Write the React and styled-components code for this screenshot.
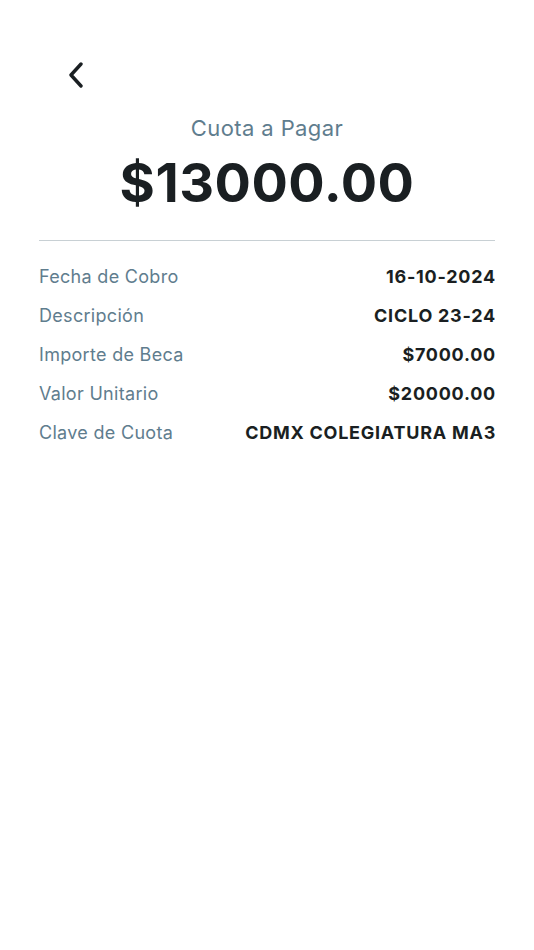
import React from "react";
import styled, { createGlobalStyle } from "styled-components";

const GlobalStyle = createGlobalStyle`
  body {
    margin: 0;
    background: #ffffff;
    font-family: Inter, "Noto Sans", sans-serif;
  }
`;

const Screen = styled.div`
  width: 534px;
  min-height: 950px;
  background: #fff;
  padding: 58px 39px 0;
  box-sizing: border-box;
`;

const BackButton = styled.button`
  display: flex;
  align-items: center;
  justify-content: center;
  width: 34px;
  height: 34px;
  margin-left: 20px;
  padding: 0;
  border: none;
  background: none;
  cursor: pointer;
  color: #1a1f22;
`;

const Header = styled.div`
  display: flex;
  flex-direction: column;
  align-items: center;
  margin-top: 22px;
`;

const Title = styled.div`
  font-size: 22px;
  color: #5f7d8e;
  letter-spacing: 0.4px;
  line-height: 28px;
`;

const Amount = styled.div`
  font-size: 54px;
  font-weight: 700;
  color: #1a1f22;
  line-height: 68px;
  margin-top: 7px;
  letter-spacing: 0.5px;
`;

const Divider = styled.hr`
  border: none;
  height: 1px;
  background: #c8d0d4;
  margin: 23px 0 16px;
`;

const Rows = styled.div`
  display: flex;
  flex-direction: column;
`;

const Row = styled.div`
  display: flex;
  justify-content: space-between;
  align-items: center;
  height: 39px;
`;

const Label = styled.span`
  font-size: 18px;
  color: #5f7d8e;
  letter-spacing: 0.3px;
`;

const Value = styled.span`
  font-size: 18px;
  font-weight: 700;
  color: #1a1f22;
  letter-spacing: 0.75px;
  margin-right: -1px;
`;

const details = [
  ["Fecha de Cobro", "16-10-2024"],
  ["Descripción", "CICLO 23-24"],
  ["Importe de Beca", "$7000.00"],
  ["Valor Unitario", "$20000.00"],
  ["Clave de Cuota", "CDMX COLEGIATURA MA3"],
];

const App = () => {
  return (
    <>
      <GlobalStyle />
      <Screen>
        <BackButton aria-label="Regresar">
          <svg width="16" height="26" viewBox="0 0 16 26" fill="none">
            <path
              d="M13 2 L3 13 L13 24"
              stroke="currentColor"
              strokeWidth="3.4"
              strokeLinecap="round"
              strokeLinejoin="round"
            />
          </svg>
        </BackButton>
        <Header>
          <Title>Cuota a Pagar</Title>
          <Amount>$13000.00</Amount>
        </Header>
        <Divider />
        <Rows>
          {details.map(([label, value]) => (
            <Row key={label}>
              <Label>{label}</Label>
              <Value>{value}</Value>
            </Row>
          ))}
        </Rows>
      </Screen>
    </>
  );
};

export default App;
